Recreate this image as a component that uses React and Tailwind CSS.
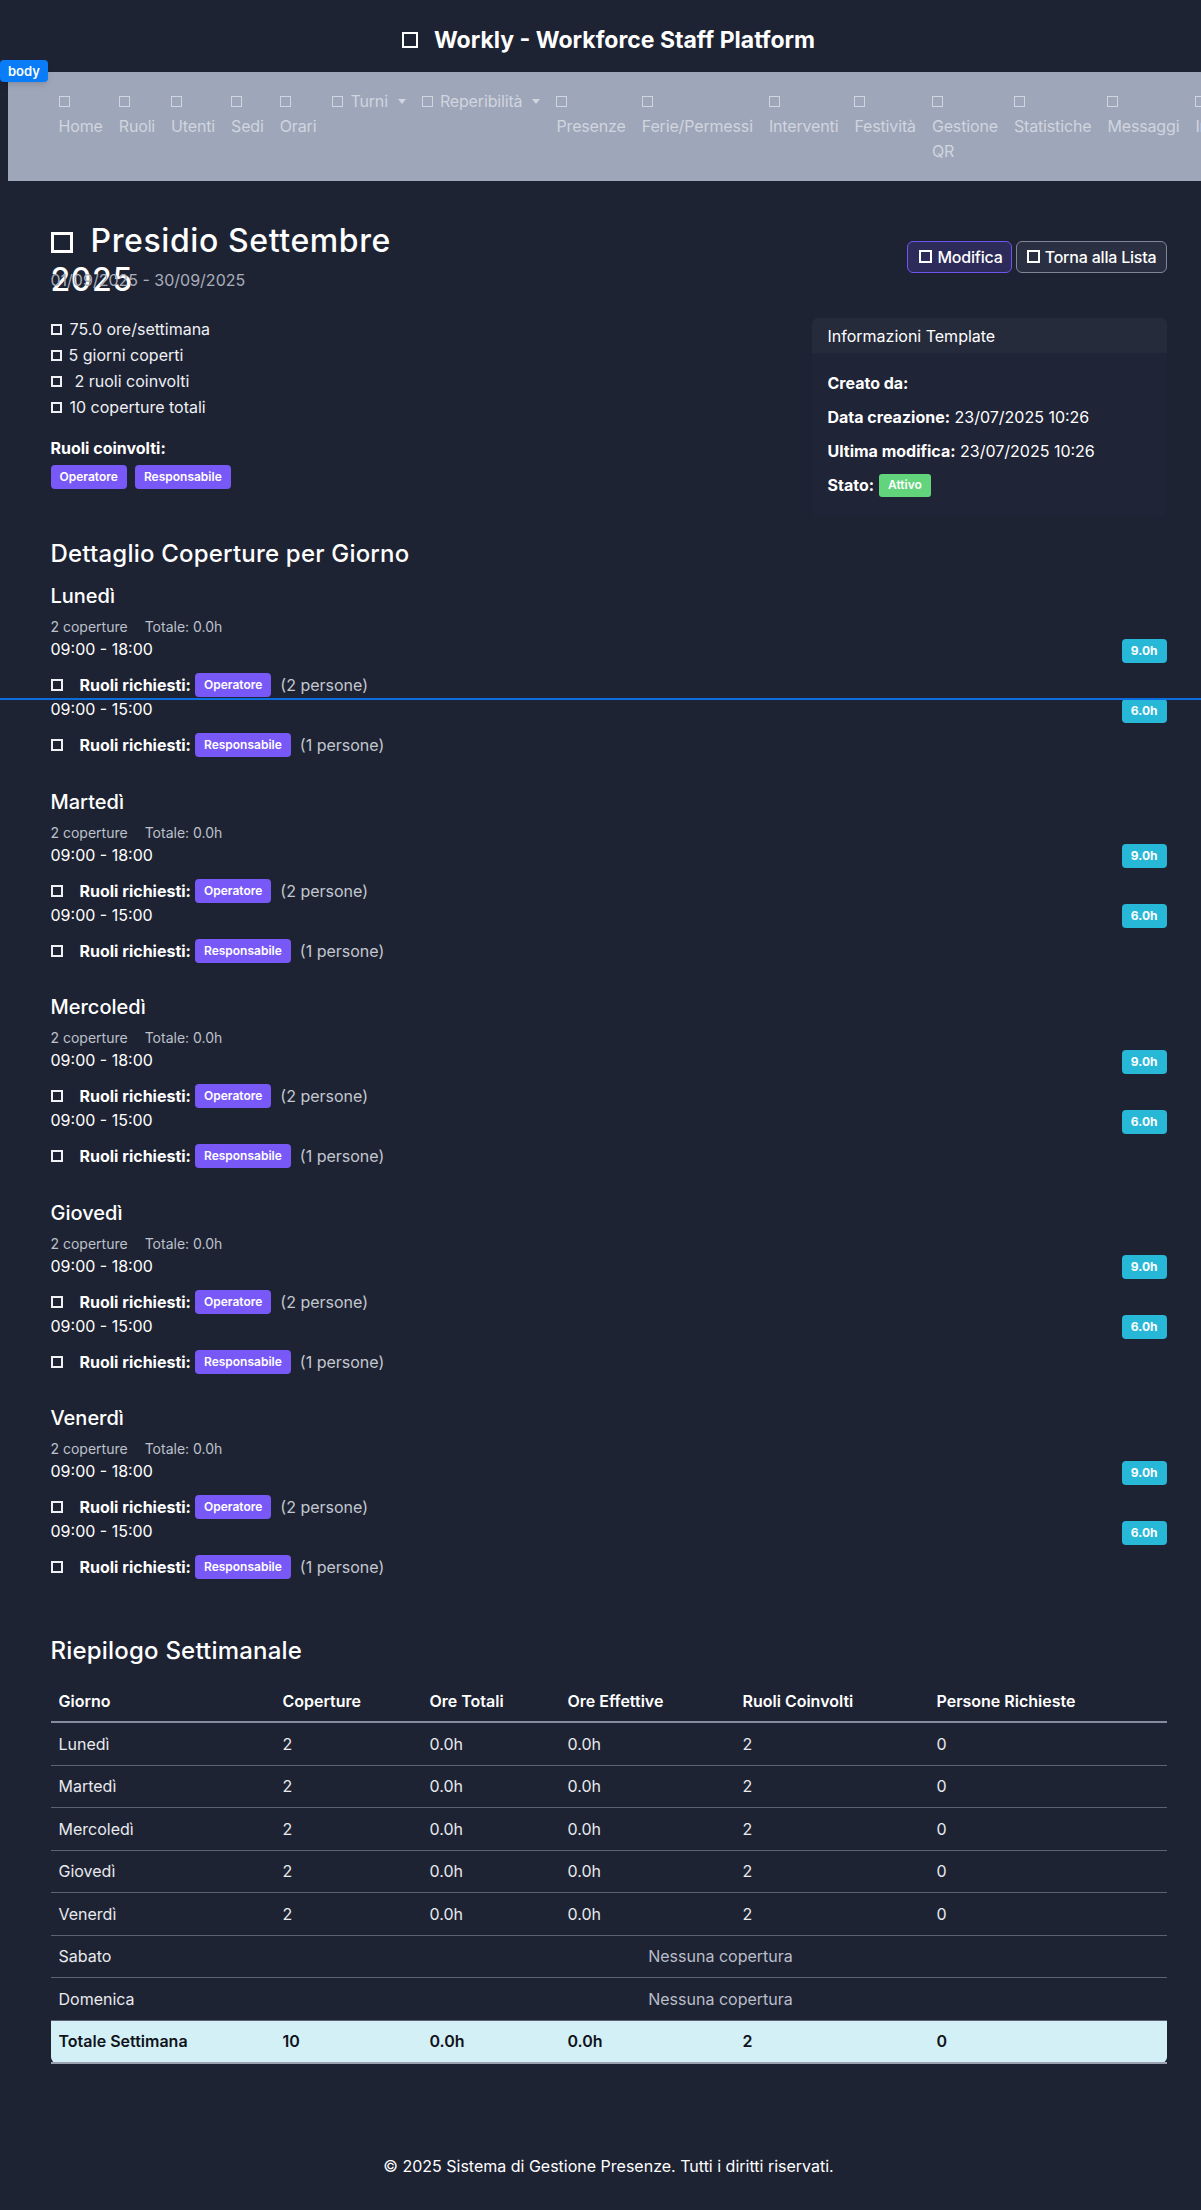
import React from "react";

const navItems = [
  { label: ["Home"] },
  { label: ["Ruoli"] },
  { label: ["Utenti"] },
  { label: ["Sedi"] },
  { label: ["Orari"] },
  { label: ["Turni"], dropdown: true },
  { label: ["Reperibilità"], dropdown: true },
  { label: ["Presenze"] },
  { label: ["Ferie/Permessi"] },
  { label: ["Interventi"] },
  { label: ["Festività"] },
  { label: ["Gestione", "QR"] },
  { label: ["Statistiche"] },
  { label: ["Messaggi"] },
  { label: ["Impostazioni"] },
];

const days = ["Lunedì", "Martedì", "Mercoledì", "Giovedì", "Venerdì"];

const covers = [
  { time: "09:00 - 18:00", hours: "9.0h", role: "Operatore", people: "(2 persone)" },
  { time: "09:00 - 15:00", hours: "6.0h", role: "Responsabile", people: "(1 persone)" },
];

const summary = [
  { day: "Lunedì", cov: "2", tot: "0.0h", eff: "0.0h", roles: "2", people: "0" },
  { day: "Martedì", cov: "2", tot: "0.0h", eff: "0.0h", roles: "2", people: "0" },
  { day: "Mercoledì", cov: "2", tot: "0.0h", eff: "0.0h", roles: "2", people: "0" },
  { day: "Giovedì", cov: "2", tot: "0.0h", eff: "0.0h", roles: "2", people: "0" },
  { day: "Venerdì", cov: "2", tot: "0.0h", eff: "0.0h", roles: "2", people: "0" },
  { day: "Sabato", empty: true },
  { day: "Domenica", empty: true },
];

// the "missing glyph" boxes that stand in for the icon font
const Box = ({ className }) => (
  <span className={"inline-block shrink-0 border-current " + className} />
);

const RoleBadge = ({ children }) => (
  <span className="inline-flex items-center h-6 px-[9px] rounded-[4px] bg-[#7859f7] text-white text-xs font-semibold">
    {children}
  </span>
);

const App = () => {
  return (
    <div
      className="relative min-h-screen overflow-hidden bg-[#1e2333] text-[#eef0f4]"
      style={{ fontFamily: "Inter, 'Noto Sans', sans-serif" }}
    >
      <div className="w-[1217px]">
        {/* header */}
        <div className="h-[72px] flex justify-center items-start pt-[24px]">
          <h1 className="flex items-center h-8 text-[23px] leading-8 font-bold text-white">
            <Box className="w-4 h-4 border-2 mr-4" />
            Workly - Workforce Staff Platform
          </h1>
        </div>

        {/* nav */}
        <nav className="mx-2 h-[109px] bg-[#9ea6b9] text-[#d0d5df] tracking-[-0.15px]">
          <div className="w-[1140px] mx-auto px-3 pt-[16px] flex flex-nowrap">
            {navItems.map((item) =>
              item.dropdown ? (
                <div key={item.label[0]} className="px-2 h-[26px] flex items-center shrink-0 whitespace-nowrap">
                  <Box className="w-[11px] h-[11px] border-[1.5px] mr-[7px]" />
                  <span>{item.label[0]}</span>
                  <span className="ml-[10px] w-0 h-0 border-t-[5px] border-x-[4px] border-x-transparent border-t-current" />
                </div>
              ) : (
                <div key={item.label[0]} className="px-2 flex flex-col items-start shrink-0 whitespace-nowrap">
                  <div className="h-[26px] flex items-center">
                    <Box className="w-[11px] h-[11px] border-[1.5px]" />
                  </div>
                  {item.label.map((l) => (
                    <span key={l} className="leading-[25px]">{l}</span>
                  ))}
                </div>
              )
            )}
          </div>
        </nav>

        <main className="w-[1116px] mx-auto">
          {/* title row */}
          <div className="flex items-center justify-between pt-[40px]">
            <div className="w-[370px]">
              <h1 className="h-[39px] mb-2 text-[32px] leading-[39px] font-medium tracking-[0.6px] text-white">
                <span className="inline-block w-[22px] h-[21px] border-[3px] border-white align-[-1px] mr-[18px]" />
                Presidio Settembre 2025
              </h1>
              <p className="leading-6 text-[#a9aebb]">01/09/2025 - 30/09/2025</p>
            </div>
            <div className="flex gap-1 tracking-[-0.2px]">
              <button className="flex items-center h-8 pl-[11px] pr-[8px] rounded-md border-[1.5px] border-[#6d55ef] bg-[#2c2b5a] text-white font-medium">
                <Box className="w-[13px] h-[13px] border-2 mr-[5px]" />
                Modifica
              </button>
              <button className="flex items-center h-8 pl-[10px] pr-[9px] rounded-md border-[1.5px] border-[#7f8698] bg-[#2a3041] text-white font-medium">
                <Box className="w-[13px] h-[13px] border-2 mr-[5px]" />
                Torna alla Lista
              </button>
            </div>
          </div>

          {/* stats + info card */}
          <div className="mt-[24px] flex justify-between items-start">
            <div>
              <ul>
                <li className="h-[26px] flex items-center">
                  <Box className="w-[11px] h-[11px] border-2 mr-[8px]" />
                  75.0 ore/settimana
                </li>
                <li className="h-[26px] flex items-center">
                  <Box className="w-[11px] h-[11px] border-2 mr-[7px]" />
                  5 giorni coperti
                </li>
                <li className="h-[26px] flex items-center">
                  <Box className="w-[11px] h-[11px] border-2 mr-[13px]" />
                  2 ruoli coinvolti
                </li>
                <li className="h-[26px] flex items-center">
                  <Box className="w-[11px] h-[11px] border-2 mr-[8px]" />
                  10 coperture totali
                </li>
              </ul>
              <p className="mt-4 leading-6 font-bold text-white">Ruoli coinvolti:</p>
              <div className="mt-[5px] flex gap-2">
                <RoleBadge>Operatore</RoleBadge>
                <RoleBadge>Responsabile</RoleBadge>
              </div>
            </div>

            <div className="w-[355px] mt-[2px] rounded-md overflow-hidden bg-[#1f2436]">
              <div className="h-[35px] flex items-center px-4 bg-[#262b3c] text-white">
                Informazioni Template
              </div>
              <div className="px-4 pt-[18px] pb-[19px] flex flex-col gap-[10px] text-white">
                <p className="h-6 leading-6"><b>Creato da:</b></p>
                <p className="h-6 leading-6"><b>Data creazione:</b> 23/07/2025 10:26</p>
                <p className="h-6 leading-6"><b>Ultima modifica:</b> 23/07/2025 10:26</p>
                <p className="h-6 flex items-center">
                  <b>Stato:</b>
                  <span className="ml-[5px] inline-flex items-center h-[23px] px-[9px] rounded-[3px] bg-[#62d47b] text-white text-xs font-semibold">
                    Attivo
                  </span>
                </p>
              </div>
            </div>
          </div>

          {/* coverage detail */}
          <h2 className="mt-[23px] mb-4 text-2xl leading-[29px] font-medium tracking-[0.2px] text-white">
            Dettaglio Coperture per Giorno
          </h2>

          {days.map((d) => (
            <div key={d} className="mb-[32.5px]">
              <h5 className="mb-[9px] text-xl leading-6 font-medium text-white">{d}</h5>
              <div className="flex gap-[17px] text-sm leading-5 text-[#bcc1cb]">
                <span>2 coperture</span>
                <span>Totale: 0.0h</span>
              </div>
              {covers.map((c) => (
                <div key={c.time}>
                  <div className="h-6 flex items-center justify-between">
                    <span className="leading-6 text-white">{c.time}</span>
                    <span className="inline-flex items-center h-6 px-[9px] mt-[3px] rounded-[4px] bg-[#27b7d7] text-white text-xs font-bold">
                      {c.hours}
                    </span>
                  </div>
                  <div className="mt-3 h-6 flex items-center">
                    <Box className="w-3 h-3 border-2 mr-[17px]" />
                    <b className="text-white mr-[4px]">Ruoli richiesti:</b>
                    <RoleBadge>{c.role}</RoleBadge>
                    <span className="ml-[9px] text-[#c3c7cf]">{c.people}</span>
                  </div>
                </div>
              ))}
            </div>
          ))}

          {/* weekly summary */}
          <h2 className="mt-[57px] mb-4 text-2xl leading-[29px] font-medium tracking-[0.2px] text-white">
            Riepilogo Settimanale
          </h2>
          <table className="w-full table-fixed border-collapse text-left">
            <colgroup>
              <col className="w-[224px]" />
              <col className="w-[147px]" />
              <col className="w-[138px]" />
              <col className="w-[175px]" />
              <col className="w-[194px]" />
              <col />
            </colgroup>
            <thead>
              <tr className="border-b-2 border-[#858c9d]">
                {["Giorno", "Coperture", "Ore Totali", "Ore Effettive", "Ruoli Coinvolti", "Persone Richieste"].map((h) => (
                  <th key={h} className="px-2 py-2 leading-6 font-semibold text-white">{h}</th>
                ))}
              </tr>
            </thead>
            <tbody className="text-[#e8eaee]">
              {summary.map((r) => (
                <tr key={r.day} className="border-b border-[#5b6274]">
                  <td className="px-2 py-[8.75px] leading-6">{r.day}</td>
                  {r.empty ? (
                    <td colSpan={5} className="px-2 py-[8.75px] leading-6 text-center text-[#b9bec8]">
                      Nessuna copertura
                    </td>
                  ) : (
                    <>
                      <td className="px-2 py-[8.75px] leading-6">{r.cov}</td>
                      <td className="px-2 py-[8.75px] leading-6">{r.tot}</td>
                      <td className="px-2 py-[8.75px] leading-6">{r.eff}</td>
                      <td className="px-2 py-[8.75px] leading-6">{r.roles}</td>
                      <td className="px-2 py-[8.75px] leading-6">{r.people}</td>
                    </>
                  )}
                </tr>
              ))}
              <tr className="bg-[#d2f0f6] text-[#10131a] font-semibold border-b-2 border-[#9aa2b2]">
                <td className="px-2 py-[8.75px] leading-6 rounded-bl-md">Totale Settimana</td>
                <td className="px-2 py-[8.75px] leading-6">10</td>
                <td className="px-2 py-[8.75px] leading-6">0.0h</td>
                <td className="px-2 py-[8.75px] leading-6">0.0h</td>
                <td className="px-2 py-[8.75px] leading-6">2</td>
                <td className="px-2 py-[8.75px] leading-6 rounded-br-md">0</td>
              </tr>
            </tbody>
          </table>
        </main>

        <footer className="mt-[90px] pb-[33px] text-center leading-6 text-white">
          © 2025 Sistema di Gestione Presenze. Tutti i diritti riservati.
        </footer>
      </div>

      {/* devtools overlay left in the capture */}
      <div className="absolute top-[60px] left-0 h-[22px] px-2 rounded-[4px] bg-[#0a7cf7] text-white text-[13px] font-semibold leading-[22px] shadow-md">
        body
      </div>
      <div className="absolute top-[698px] left-0 w-full h-[2px] bg-[#0b6fe0]" />
    </div>
  );
};

export default App;
